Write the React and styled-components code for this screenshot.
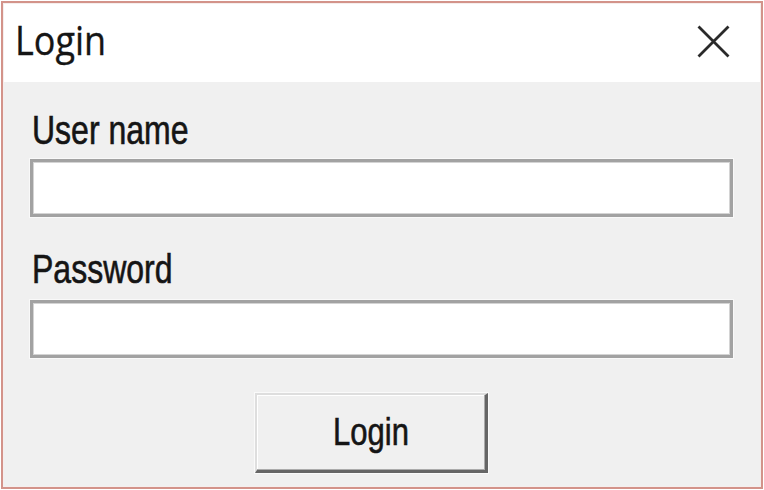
import React from 'react';
import styled, { createGlobalStyle } from 'styled-components';

const GlobalStyle = createGlobalStyle`
    html, body {
        margin: 0;
        padding: 0;
        background: #ffffff;
    }
`;

const Window = styled.div`
    margin: 1px;
    width: 762px;
    height: 488px;
    box-sizing: border-box;
    border: 2px solid #d3938a;
    box-shadow: inset 0 0 0 1px #f6eeed;
    background: #f0f0f0;
    display: flex;
    flex-direction: column;
`;

const TitleBar = styled.div`
    height: 78px;
    flex: none;
    background: #ffffff;
    margin: 1px 1px 0 1px;
    display: flex;
    justify-content: space-between;
    align-items: flex-start;
    padding: 0 30px 0 11px;
`;

const Caption = styled.span`
    display: inline-block;
    margin-top: 20px;
    font-family: "Open Sans", "Noto Sans", sans-serif;
    font-size: 36px;
    line-height: 36px;
    color: #151515;
    -webkit-text-stroke: 0.3px #151515;
    transform: scaleY(1.09);
    transform-origin: 0 32px;
`;

const CloseButton = styled.button`
    margin-top: 21px;
    width: 33px;
    height: 33px;
    padding: 0;
    border: 0;
    background: transparent;
    svg { display: block; }
`;

const Body = styled.div`
    flex: 1;
    display: flex;
    flex-direction: column;
    padding: 0 28px 0 27px;
`;

const Label = styled.span`
    display: block;
    margin-top: ${p => p.$gap}px;
    margin-left: 2px;
    height: 32px;
    font-family: "Liberation Sans", Arial, sans-serif;
    font-size: 32px;
    line-height: 32px;
    color: #151515;
    -webkit-text-stroke: 0.5px #151515;
    transform: scaleY(1.28);
    transform-origin: 0 27px;
`;

const TextBox = styled.input`
    margin-top: ${p => p.$gap}px;
    width: 100%;
    height: 58px;
    box-sizing: border-box;
    border: 3px solid #a2a2a2;
    box-shadow: inset 0 0 0 1px #d4d4d4, 0 0 0 1px #f9f9f9;
    background: #ffffff;
    outline: none;
    padding: 0 8px;
    font-family: "Liberation Sans", Arial, sans-serif;
    font-size: 28px;
`;

const PushButton = styled.button`
    margin-top: 35px;
    margin-left: 225px;
    align-self: flex-start;
    width: 233px;
    height: 80px;
    box-sizing: border-box;
    padding: 0;
    background: #f0f0f0;
    border-style: solid;
    border-width: 2px 3px 3px 2px;
    border-color: #dedede #666666 #666666 #dedede;
    box-shadow: inset -1px -1px 0 #ababab, inset 1px 1px 0 #ffffff, 0 0 0 1px #fafafa;
    display: flex;
    justify-content: center;
    align-items: flex-start;
`;

const ButtonText = styled.span`
    display: inline-block;
    margin-top: 24px;
    font-family: "Liberation Sans", Arial, sans-serif;
    font-size: 31px;
    line-height: 31px;
    color: #151515;
    -webkit-text-stroke: 0.5px #151515;
    transform: scaleY(1.27);
    transform-origin: 0 26px;
`;

const fields = [
    { label: 'User name', labelGap: 35, boxGap: 10, type: 'text' },
    { label: 'Password', labelGap: 39, boxGap: 12, type: 'password' },
];

const App = () => {
    return (
        <>
            <GlobalStyle />
            <Window>
                <TitleBar>
                    <Caption>Login</Caption>
                    <CloseButton aria-label="Close">
                        <svg width="33" height="33" viewBox="0 0 33 33">
                            <path d="M1.5 1.5 L31.5 31.5 M31.5 1.5 L1.5 31.5" stroke="#2a2a2a" strokeWidth="2.8" fill="none" />
                        </svg>
                    </CloseButton>
                </TitleBar>
                <Body>
                    {fields.map(f => (
                        <React.Fragment key={f.label}>
                            <Label $gap={f.labelGap}>{f.label}</Label>
                            <TextBox $gap={f.boxGap} type={f.type} />
                        </React.Fragment>
                    ))}
                    <PushButton>
                        <ButtonText>Login</ButtonText>
                    </PushButton>
                </Body>
            </Window>
        </>
    );
}

export default App;
